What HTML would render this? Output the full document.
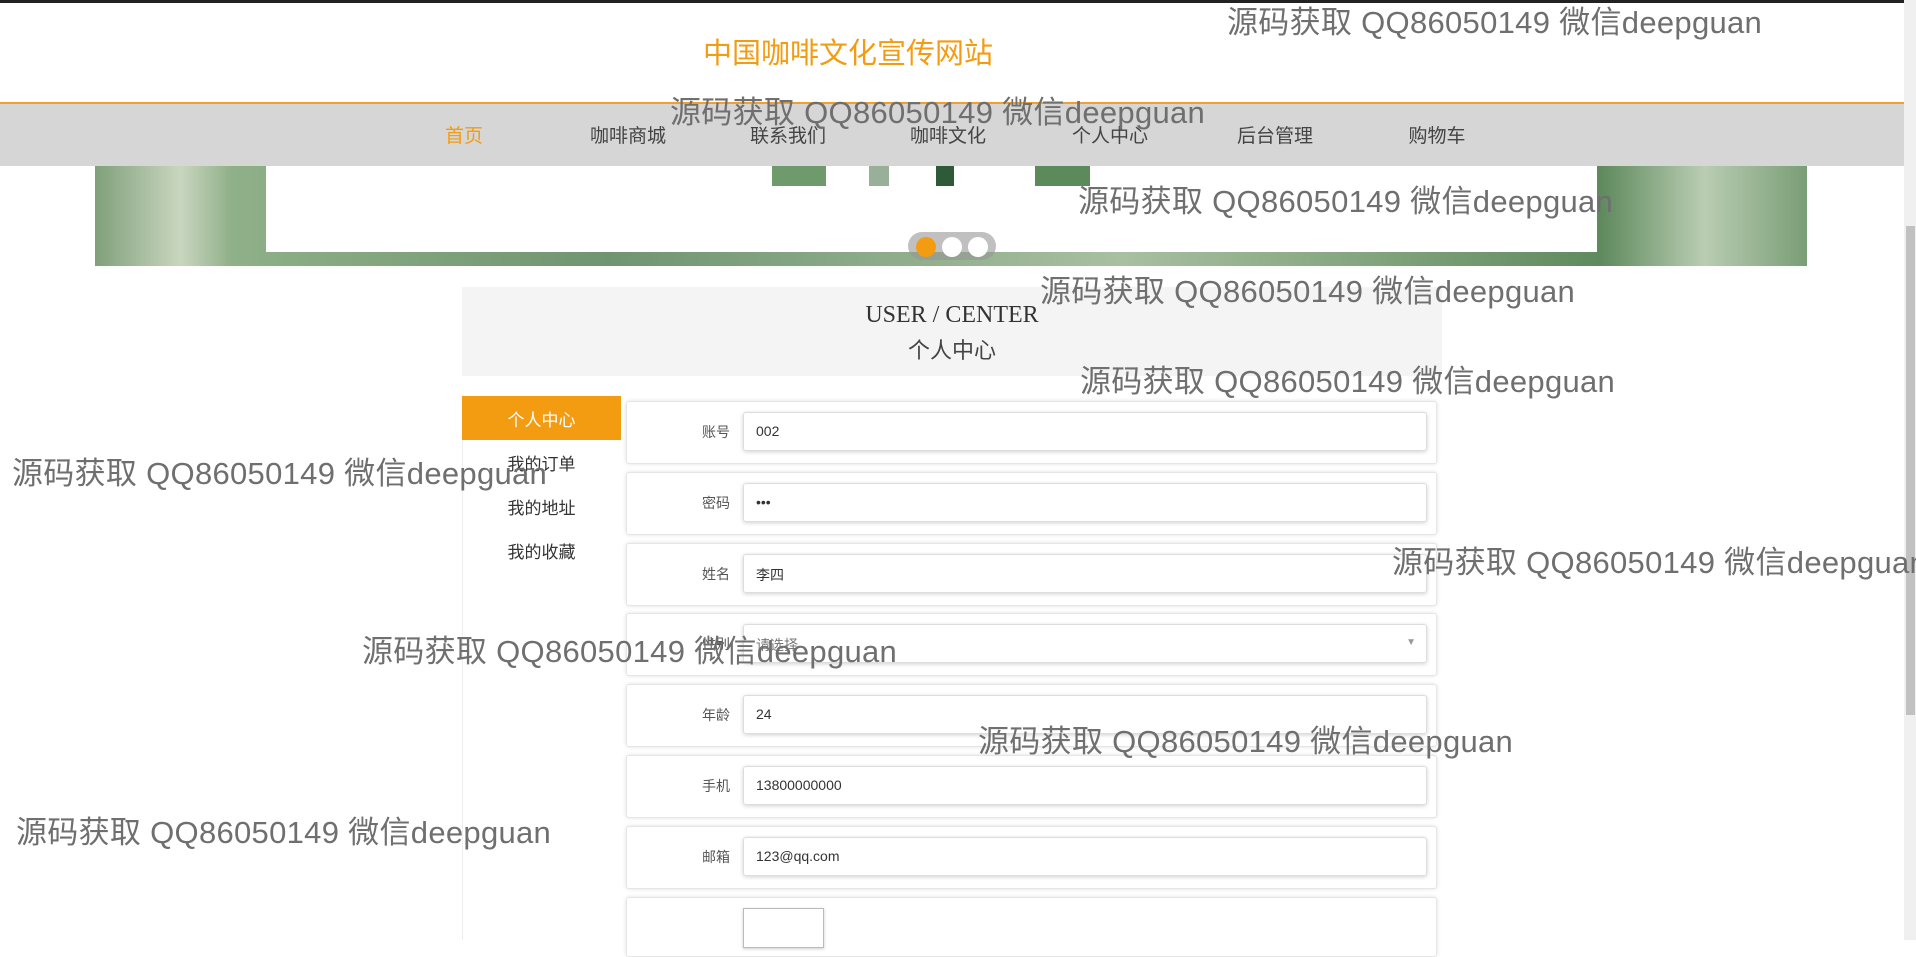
<!DOCTYPE html>
<html><head><meta charset="utf-8"><style>
*{margin:0;padding:0;box-sizing:border-box}
body{width:1916px;height:940px;overflow:hidden;background:#fff;font-family:"Liberation Sans","Noto Sans CJK SC",sans-serif;position:relative}
.abs{position:absolute}
.wm{position:absolute;font-size:31px;letter-spacing:0.3px;color:#6f6f6f;white-space:nowrap;line-height:36px;z-index:10}
.nav span{position:absolute;top:121px;font-size:19px;color:#444;transform:translateX(-50%);white-space:nowrap}
.row{position:absolute;left:626px;width:811px;height:63px;border:1px solid #e6e6e6;border-radius:3px;box-shadow:0 0 4px rgba(0,0,0,.12);background:#fff}
.row .lb{position:absolute;right:706px;top:20px;font-size:14px;color:#555}
.row .in{position:absolute;left:116px;top:10px;width:684px;height:39px;border:1px solid #ddd;border-radius:3px;box-shadow:0 1px 4px rgba(0,0,0,.18);font-size:14px;color:#333;padding:10px 0 0 12px}
.menu div{position:absolute;left:462px;width:159px;text-align:center;font-size:17px;color:#333}
</style></head><body>
<div class="abs" style="left:0;top:0;width:1916px;height:3px;background:#222"></div>
<div class="abs" style="left:0;top:30px;width:1696px;text-align:center;font-size:29px;color:#f39c12">中国咖啡文化宣传网站</div>
<div class="abs" style="left:0;top:102px;width:1904px;height:2px;background:#f0a030"></div>
<div class="abs" style="left:0;top:104px;width:1904px;height:62px;background:#d6d6d6"></div>
<div class="nav">
<span style="left:464px;color:#f39c12">首页</span><span style="left:628px">咖啡商城</span><span style="left:788px">联系我们</span><span style="left:948px">咖啡文化</span><span style="left:1110px">个人中心</span><span style="left:1275px">后台管理</span><span style="left:1437px">购物车</span>
</div>
<div class="abs" style="left:95px;top:166px;width:1712px;height:100px;background:linear-gradient(90deg,#7fa07a,#c9d6bf 5%,#8fb088 8%,#6f9570 30%,#a8c0a0 60%,#5f8a5e 88%,#b9cdb2 94%,#7a9d76)"></div>
<div class="abs" style="left:266px;top:166px;width:1331px;height:86px;background:#fff"></div>
<div class="abs" style="left:772px;top:166px;width:54px;height:20px;background:#6f9a6c"></div>
<div class="abs" style="left:869px;top:166px;width:20px;height:20px;background:#9aaf98"></div>
<div class="abs" style="left:936px;top:166px;width:18px;height:20px;background:#2e5a3a"></div>
<div class="abs" style="left:1035px;top:166px;width:55px;height:20px;background:#5d8a5a"></div>
<div class="abs" style="left:908px;top:232px;width:88px;height:28px;border-radius:14px;background:rgba(150,150,150,.6)"></div>
<div class="abs" style="left:916px;top:237px;width:20px;height:20px;border-radius:50%;background:#f39c12"></div>
<div class="abs" style="left:942px;top:237px;width:20px;height:20px;border-radius:50%;background:#fff"></div>
<div class="abs" style="left:968px;top:237px;width:20px;height:20px;border-radius:50%;background:#fff"></div>
<div class="abs" style="left:462px;top:287px;width:980px;height:89px;background:#f4f4f4"></div>
<div class="abs" style="left:462px;top:302px;width:980px;text-align:center;font-family:'Liberation Serif',serif;font-size:24px;color:#333">USER / CENTER</div>
<div class="abs" style="left:462px;top:333px;width:980px;text-align:center;font-size:22px;color:#444">个人中心</div>
<div class="abs" style="left:462px;top:396px;width:1px;height:544px;background:#eee"></div>
<div class="abs" style="left:462px;top:396px;width:159px;height:44px;background:#f39c12"></div>
<div class="menu">
<div style="top:406px;color:#fff">个人中心</div><div style="top:450px">我的订单</div><div style="top:494px">我的地址</div><div style="top:538px">我的收藏</div>
</div>
<div class="row" style="top:401px"><span class="lb">账号</span><div class="in">002</div></div>
<div class="row" style="top:472px"><span class="lb">密码</span><div class="in">•••</div></div>
<div class="row" style="top:543px"><span class="lb">姓名</span><div class="in">李四</div></div>
<div class="row" style="top:613px"><span class="lb">性别</span><div class="in" style="color:#777">请选择<span style="position:absolute;right:10px;top:12px;font-size:10px;color:#999">▼</span></div></div>
<div class="row" style="top:684px"><span class="lb">年龄</span><div class="in">24</div></div>
<div class="row" style="top:755px"><span class="lb">手机</span><div class="in">13800000000</div></div>
<div class="row" style="top:826px"><span class="lb">邮箱</span><div class="in">123@qq.com</div></div>
<div class="row" style="top:897px;height:60px"><div class="abs" style="left:116px;top:10px;width:81px;height:40px;border:1px solid #bbb;box-shadow:0 1px 3px rgba(0,0,0,.2)"></div></div>
<div class="abs" style="left:1904px;top:0;width:12px;height:940px;background:#f0f0f0"></div>
<div class="abs" style="left:1906px;top:226px;width:9px;height:489px;background:#c1c1c1"></div>
<div class="wm" style="left:1227px;top:5px">源码获取 QQ86050149 微信deepguan</div>
<div class="wm" style="left:670px;top:95px">源码获取 QQ86050149 微信deepguan</div>
<div class="wm" style="left:1078px;top:184px">源码获取 QQ86050149 微信deepguan</div>
<div class="wm" style="left:1040px;top:274px">源码获取 QQ86050149 微信deepguan</div>
<div class="wm" style="left:1080px;top:364px">源码获取 QQ86050149 微信deepguan</div>
<div class="wm" style="left:12px;top:456px">源码获取 QQ86050149 微信deepguan</div>
<div class="wm" style="left:1392px;top:545px">源码获取 QQ86050149 微信deepguan</div>
<div class="wm" style="left:362px;top:634px">源码获取 QQ86050149 微信deepguan</div>
<div class="wm" style="left:978px;top:724px">源码获取 QQ86050149 微信deepguan</div>
<div class="wm" style="left:16px;top:815px">源码获取 QQ86050149 微信deepguan</div>
</body></html>
